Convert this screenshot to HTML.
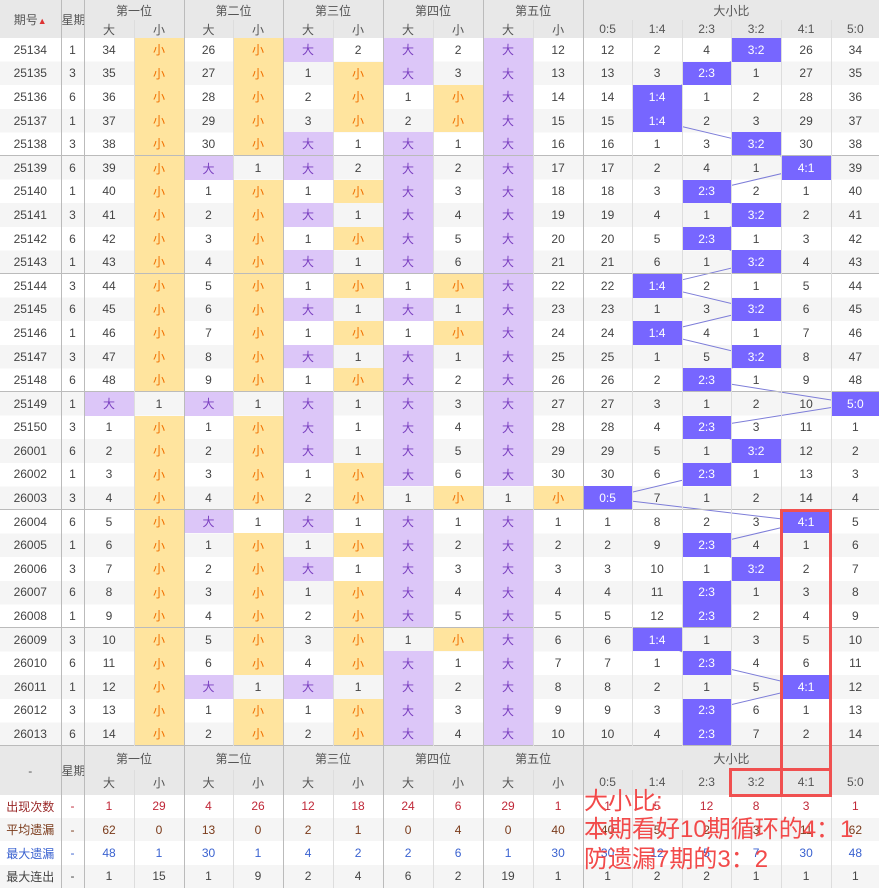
<!DOCTYPE html>
<html><head><meta charset="utf-8">
<style>
*{margin:0;padding:0;box-sizing:border-box}
body{width:879px;height:890px;background:#fff;font-family:"Liberation Sans","Noto Sans CJK SC",sans-serif;font-size:12px;color:#444;position:relative;overflow:hidden}
#stripes{position:absolute;left:0;top:38px;width:879px;height:708px;background:repeating-linear-gradient(#fff 0 23.6px,#f5f5f5 23.6px 47.2px);z-index:0}
#lines{position:absolute;left:0;top:0;z-index:1}
table{position:absolute;left:0;top:0;border-collapse:collapse;table-layout:fixed;width:879px;z-index:2}
td{text-align:center;border-left:1px solid #ddd;padding:0;white-space:nowrap;overflow:hidden}
.d td{height:23.6px}
.g td{border-top:1px solid #bbb}
td.L{border-left:1px solid #bbb}
tr.h{background:#e8e8e8}
.h td{background:#e8e8e8;color:#555;font-size:12px}
.s{background:#ffe49e;color:#f07000}
.b{background:#dcc6f8;color:#7a3fc0}
.r{background:#7766ff;color:#fff}
.st td{height:23.3px}
.c1 td{color:#c02838}.c1 td:first-child{color:#9a2828}
.c2 td{color:#7a3a1a}
.c3 td{color:#3a62d0}
.c4 td{color:#444}
.note{position:absolute;left:584px;z-index:4;color:#f24a4a;font-size:24px;line-height:28px;white-space:nowrap}
.box{position:absolute;border:3px solid #f05050;z-index:5}
</style></head><body>
<div id="stripes"></div>
<svg id="lines" width="879" height="890"><polyline fill="none" stroke="#7d7dd8" stroke-width="1" points="756,49.8 706,73.4 657,97 657,120.6 756,144.2 806,167.8 706,191.4 756,215 706,238.6 756,262.2 657,285.8 756,309.4 657,333 756,356.6 706,380.2 855,403.8 706,427.4 756,451 706,474.6 607,498.2 806,521.8 706,545.4 756,569 706,592.6 706,616.2 657,639.8 706,663.4 806,687 706,710.6 706,734.2"/></svg>
<table>
<colgroup><col style="width:61px"><col style="width:23px"><col style="width:50px"><col style="width:50px"><col style="width:49px"><col style="width:50px"><col style="width:50px"><col style="width:50px"><col style="width:50px"><col style="width:50px"><col style="width:50px"><col style="width:50px"><col style="width:49px"><col style="width:50px"><col style="width:49px"><col style="width:50px"><col style="width:50px"><col style="width:48px"></colgroup>
<tr class="h"><td rowspan="2" style="height:38px;border-left:none">期号<span style="color:#d33;font-size:9px">▲</span></td><td rowspan="2" class="L">星期</td><td colspan="2" class="L" style="height:20px">第一位</td><td colspan="2" class="L">第二位</td><td colspan="2" class="L">第三位</td><td colspan="2" class="L">第四位</td><td colspan="2" class="L">第五位</td><td colspan="6" class="L">大小比</td></tr>
<tr class="h"><td class="L" style="height:18px">大</td><td>小</td><td class="L">大</td><td>小</td><td class="L">大</td><td>小</td><td class="L">大</td><td>小</td><td class="L">大</td><td>小</td><td class="L">0:5</td><td>1:4</td><td>2:3</td><td>3:2</td><td>4:1</td><td>5:0</td></tr>

<tr class="d"><td style="border-left:none">25134</td><td class="L">1</td><td class="L">34</td><td class="s">小</td><td class="L">26</td><td class="s">小</td><td class="L b">大</td><td>2</td><td class="L b">大</td><td>2</td><td class="L b">大</td><td>12</td><td class="L">12</td><td>2</td><td>4</td><td class="r">3:2</td><td>26</td><td>34</td></tr>
<tr class="d"><td style="border-left:none">25135</td><td class="L">3</td><td class="L">35</td><td class="s">小</td><td class="L">27</td><td class="s">小</td><td class="L">1</td><td class="s">小</td><td class="L b">大</td><td>3</td><td class="L b">大</td><td>13</td><td class="L">13</td><td>3</td><td class="r">2:3</td><td>1</td><td>27</td><td>35</td></tr>
<tr class="d"><td style="border-left:none">25136</td><td class="L">6</td><td class="L">36</td><td class="s">小</td><td class="L">28</td><td class="s">小</td><td class="L">2</td><td class="s">小</td><td class="L">1</td><td class="s">小</td><td class="L b">大</td><td>14</td><td class="L">14</td><td class="r">1:4</td><td>1</td><td>2</td><td>28</td><td>36</td></tr>
<tr class="d"><td style="border-left:none">25137</td><td class="L">1</td><td class="L">37</td><td class="s">小</td><td class="L">29</td><td class="s">小</td><td class="L">3</td><td class="s">小</td><td class="L">2</td><td class="s">小</td><td class="L b">大</td><td>15</td><td class="L">15</td><td class="r">1:4</td><td>2</td><td>3</td><td>29</td><td>37</td></tr>
<tr class="d"><td style="border-left:none">25138</td><td class="L">3</td><td class="L">38</td><td class="s">小</td><td class="L">30</td><td class="s">小</td><td class="L b">大</td><td>1</td><td class="L b">大</td><td>1</td><td class="L b">大</td><td>16</td><td class="L">16</td><td>1</td><td>3</td><td class="r">3:2</td><td>30</td><td>38</td></tr>

<tr class="d g"><td style="border-left:none">25139</td><td class="L">6</td><td class="L">39</td><td class="s">小</td><td class="L b">大</td><td>1</td><td class="L b">大</td><td>2</td><td class="L b">大</td><td>2</td><td class="L b">大</td><td>17</td><td class="L">17</td><td>2</td><td>4</td><td>1</td><td class="r">4:1</td><td>39</td></tr>
<tr class="d"><td style="border-left:none">25140</td><td class="L">1</td><td class="L">40</td><td class="s">小</td><td class="L">1</td><td class="s">小</td><td class="L">1</td><td class="s">小</td><td class="L b">大</td><td>3</td><td class="L b">大</td><td>18</td><td class="L">18</td><td>3</td><td class="r">2:3</td><td>2</td><td>1</td><td>40</td></tr>
<tr class="d"><td style="border-left:none">25141</td><td class="L">3</td><td class="L">41</td><td class="s">小</td><td class="L">2</td><td class="s">小</td><td class="L b">大</td><td>1</td><td class="L b">大</td><td>4</td><td class="L b">大</td><td>19</td><td class="L">19</td><td>4</td><td>1</td><td class="r">3:2</td><td>2</td><td>41</td></tr>
<tr class="d"><td style="border-left:none">25142</td><td class="L">6</td><td class="L">42</td><td class="s">小</td><td class="L">3</td><td class="s">小</td><td class="L">1</td><td class="s">小</td><td class="L b">大</td><td>5</td><td class="L b">大</td><td>20</td><td class="L">20</td><td>5</td><td class="r">2:3</td><td>1</td><td>3</td><td>42</td></tr>
<tr class="d"><td style="border-left:none">25143</td><td class="L">1</td><td class="L">43</td><td class="s">小</td><td class="L">4</td><td class="s">小</td><td class="L b">大</td><td>1</td><td class="L b">大</td><td>6</td><td class="L b">大</td><td>21</td><td class="L">21</td><td>6</td><td>1</td><td class="r">3:2</td><td>4</td><td>43</td></tr>

<tr class="d g"><td style="border-left:none">25144</td><td class="L">3</td><td class="L">44</td><td class="s">小</td><td class="L">5</td><td class="s">小</td><td class="L">1</td><td class="s">小</td><td class="L">1</td><td class="s">小</td><td class="L b">大</td><td>22</td><td class="L">22</td><td class="r">1:4</td><td>2</td><td>1</td><td>5</td><td>44</td></tr>
<tr class="d"><td style="border-left:none">25145</td><td class="L">6</td><td class="L">45</td><td class="s">小</td><td class="L">6</td><td class="s">小</td><td class="L b">大</td><td>1</td><td class="L b">大</td><td>1</td><td class="L b">大</td><td>23</td><td class="L">23</td><td>1</td><td>3</td><td class="r">3:2</td><td>6</td><td>45</td></tr>
<tr class="d"><td style="border-left:none">25146</td><td class="L">1</td><td class="L">46</td><td class="s">小</td><td class="L">7</td><td class="s">小</td><td class="L">1</td><td class="s">小</td><td class="L">1</td><td class="s">小</td><td class="L b">大</td><td>24</td><td class="L">24</td><td class="r">1:4</td><td>4</td><td>1</td><td>7</td><td>46</td></tr>
<tr class="d"><td style="border-left:none">25147</td><td class="L">3</td><td class="L">47</td><td class="s">小</td><td class="L">8</td><td class="s">小</td><td class="L b">大</td><td>1</td><td class="L b">大</td><td>1</td><td class="L b">大</td><td>25</td><td class="L">25</td><td>1</td><td>5</td><td class="r">3:2</td><td>8</td><td>47</td></tr>
<tr class="d"><td style="border-left:none">25148</td><td class="L">6</td><td class="L">48</td><td class="s">小</td><td class="L">9</td><td class="s">小</td><td class="L">1</td><td class="s">小</td><td class="L b">大</td><td>2</td><td class="L b">大</td><td>26</td><td class="L">26</td><td>2</td><td class="r">2:3</td><td>1</td><td>9</td><td>48</td></tr>

<tr class="d g"><td style="border-left:none">25149</td><td class="L">1</td><td class="L b">大</td><td>1</td><td class="L b">大</td><td>1</td><td class="L b">大</td><td>1</td><td class="L b">大</td><td>3</td><td class="L b">大</td><td>27</td><td class="L">27</td><td>3</td><td>1</td><td>2</td><td>10</td><td class="r">5:0</td></tr>
<tr class="d"><td style="border-left:none">25150</td><td class="L">3</td><td class="L">1</td><td class="s">小</td><td class="L">1</td><td class="s">小</td><td class="L b">大</td><td>1</td><td class="L b">大</td><td>4</td><td class="L b">大</td><td>28</td><td class="L">28</td><td>4</td><td class="r">2:3</td><td>3</td><td>11</td><td>1</td></tr>
<tr class="d"><td style="border-left:none">26001</td><td class="L">6</td><td class="L">2</td><td class="s">小</td><td class="L">2</td><td class="s">小</td><td class="L b">大</td><td>1</td><td class="L b">大</td><td>5</td><td class="L b">大</td><td>29</td><td class="L">29</td><td>5</td><td>1</td><td class="r">3:2</td><td>12</td><td>2</td></tr>
<tr class="d"><td style="border-left:none">26002</td><td class="L">1</td><td class="L">3</td><td class="s">小</td><td class="L">3</td><td class="s">小</td><td class="L">1</td><td class="s">小</td><td class="L b">大</td><td>6</td><td class="L b">大</td><td>30</td><td class="L">30</td><td>6</td><td class="r">2:3</td><td>1</td><td>13</td><td>3</td></tr>
<tr class="d"><td style="border-left:none">26003</td><td class="L">3</td><td class="L">4</td><td class="s">小</td><td class="L">4</td><td class="s">小</td><td class="L">2</td><td class="s">小</td><td class="L">1</td><td class="s">小</td><td class="L">1</td><td class="s">小</td><td class="L r">0:5</td><td>7</td><td>1</td><td>2</td><td>14</td><td>4</td></tr>

<tr class="d g"><td style="border-left:none">26004</td><td class="L">6</td><td class="L">5</td><td class="s">小</td><td class="L b">大</td><td>1</td><td class="L b">大</td><td>1</td><td class="L b">大</td><td>1</td><td class="L b">大</td><td>1</td><td class="L">1</td><td>8</td><td>2</td><td>3</td><td class="r">4:1</td><td>5</td></tr>
<tr class="d"><td style="border-left:none">26005</td><td class="L">1</td><td class="L">6</td><td class="s">小</td><td class="L">1</td><td class="s">小</td><td class="L">1</td><td class="s">小</td><td class="L b">大</td><td>2</td><td class="L b">大</td><td>2</td><td class="L">2</td><td>9</td><td class="r">2:3</td><td>4</td><td>1</td><td>6</td></tr>
<tr class="d"><td style="border-left:none">26006</td><td class="L">3</td><td class="L">7</td><td class="s">小</td><td class="L">2</td><td class="s">小</td><td class="L b">大</td><td>1</td><td class="L b">大</td><td>3</td><td class="L b">大</td><td>3</td><td class="L">3</td><td>10</td><td>1</td><td class="r">3:2</td><td>2</td><td>7</td></tr>
<tr class="d"><td style="border-left:none">26007</td><td class="L">6</td><td class="L">8</td><td class="s">小</td><td class="L">3</td><td class="s">小</td><td class="L">1</td><td class="s">小</td><td class="L b">大</td><td>4</td><td class="L b">大</td><td>4</td><td class="L">4</td><td>11</td><td class="r">2:3</td><td>1</td><td>3</td><td>8</td></tr>
<tr class="d"><td style="border-left:none">26008</td><td class="L">1</td><td class="L">9</td><td class="s">小</td><td class="L">4</td><td class="s">小</td><td class="L">2</td><td class="s">小</td><td class="L b">大</td><td>5</td><td class="L b">大</td><td>5</td><td class="L">5</td><td>12</td><td class="r">2:3</td><td>2</td><td>4</td><td>9</td></tr>

<tr class="d g"><td style="border-left:none">26009</td><td class="L">3</td><td class="L">10</td><td class="s">小</td><td class="L">5</td><td class="s">小</td><td class="L">3</td><td class="s">小</td><td class="L">1</td><td class="s">小</td><td class="L b">大</td><td>6</td><td class="L">6</td><td class="r">1:4</td><td>1</td><td>3</td><td>5</td><td>10</td></tr>
<tr class="d"><td style="border-left:none">26010</td><td class="L">6</td><td class="L">11</td><td class="s">小</td><td class="L">6</td><td class="s">小</td><td class="L">4</td><td class="s">小</td><td class="L b">大</td><td>1</td><td class="L b">大</td><td>7</td><td class="L">7</td><td>1</td><td class="r">2:3</td><td>4</td><td>6</td><td>11</td></tr>
<tr class="d"><td style="border-left:none">26011</td><td class="L">1</td><td class="L">12</td><td class="s">小</td><td class="L b">大</td><td>1</td><td class="L b">大</td><td>1</td><td class="L b">大</td><td>2</td><td class="L b">大</td><td>8</td><td class="L">8</td><td>2</td><td>1</td><td>5</td><td class="r">4:1</td><td>12</td></tr>
<tr class="d"><td style="border-left:none">26012</td><td class="L">3</td><td class="L">13</td><td class="s">小</td><td class="L">1</td><td class="s">小</td><td class="L">1</td><td class="s">小</td><td class="L b">大</td><td>3</td><td class="L b">大</td><td>9</td><td class="L">9</td><td>3</td><td class="r">2:3</td><td>6</td><td>1</td><td>13</td></tr>
<tr class="d"><td style="border-left:none">26013</td><td class="L">6</td><td class="L">14</td><td class="s">小</td><td class="L">2</td><td class="s">小</td><td class="L">2</td><td class="s">小</td><td class="L b">大</td><td>4</td><td class="L b">大</td><td>10</td><td class="L">10</td><td>4</td><td class="r">2:3</td><td>7</td><td>2</td><td>14</td></tr>

<tr class="h g"><td rowspan="2" style="border-left:none">-</td><td rowspan="2" class="L">星期</td><td colspan="2" class="L" style="height:24px">第一位</td><td colspan="2" class="L">第二位</td><td colspan="2" class="L">第三位</td><td colspan="2" class="L">第四位</td><td colspan="2" class="L">第五位</td><td colspan="6" class="L">大小比</td></tr>
<tr class="h"><td class="L" style="height:25px">大</td><td>小</td><td class="L">大</td><td>小</td><td class="L">大</td><td>小</td><td class="L">大</td><td>小</td><td class="L">大</td><td>小</td><td class="L">0:5</td><td>1:4</td><td>2:3</td><td>3:2</td><td>4:1</td><td>5:0</td></tr>
<tr class="st c1" style="background:#fff"><td style="border-left:none">出现次数</td><td class="L">-</td><td class="L">1</td><td>29</td><td class="L">4</td><td>26</td><td class="L">12</td><td>18</td><td class="L">24</td><td>6</td><td class="L">29</td><td>1</td><td class="L">1</td><td>5</td><td>12</td><td>8</td><td>3</td><td>1</td></tr>
<tr class="st c2" style="background:#f5f5f5"><td style="border-left:none">平均遗漏</td><td class="L">-</td><td class="L">62</td><td>0</td><td class="L">13</td><td>0</td><td class="L">2</td><td>1</td><td class="L">0</td><td>4</td><td class="L">0</td><td>40</td><td class="L">40</td><td>5</td><td>2</td><td>3</td><td>11</td><td>62</td></tr>
<tr class="st c3" style="background:#fff"><td style="border-left:none">最大遗漏</td><td class="L">-</td><td class="L">48</td><td>1</td><td class="L">30</td><td>1</td><td class="L">4</td><td>2</td><td class="L">2</td><td>6</td><td class="L">1</td><td>30</td><td class="L">30</td><td>12</td><td>5</td><td>7</td><td>30</td><td>48</td></tr>
<tr class="st c4" style="background:#f5f5f5"><td style="border-left:none">最大连出</td><td class="L">-</td><td class="L">1</td><td>15</td><td class="L">1</td><td>9</td><td class="L">2</td><td>4</td><td class="L">6</td><td>2</td><td class="L">19</td><td>1</td><td class="L">1</td><td>2</td><td>2</td><td>1</td><td>1</td><td>1</td></tr>
</table>
<div class="box" style="left:780px;top:509px;width:52px;height:288px"></div>
<div class="box" style="left:729px;top:768px;width:103px;height:29px"></div>
<div class="note" style="top:788px">大小比:</div>
<div class="note" style="top:816px">本期看好10期循环的4：1</div>
<div class="note" style="top:846px">防遗漏7期的3：2</div>
</body></html>
